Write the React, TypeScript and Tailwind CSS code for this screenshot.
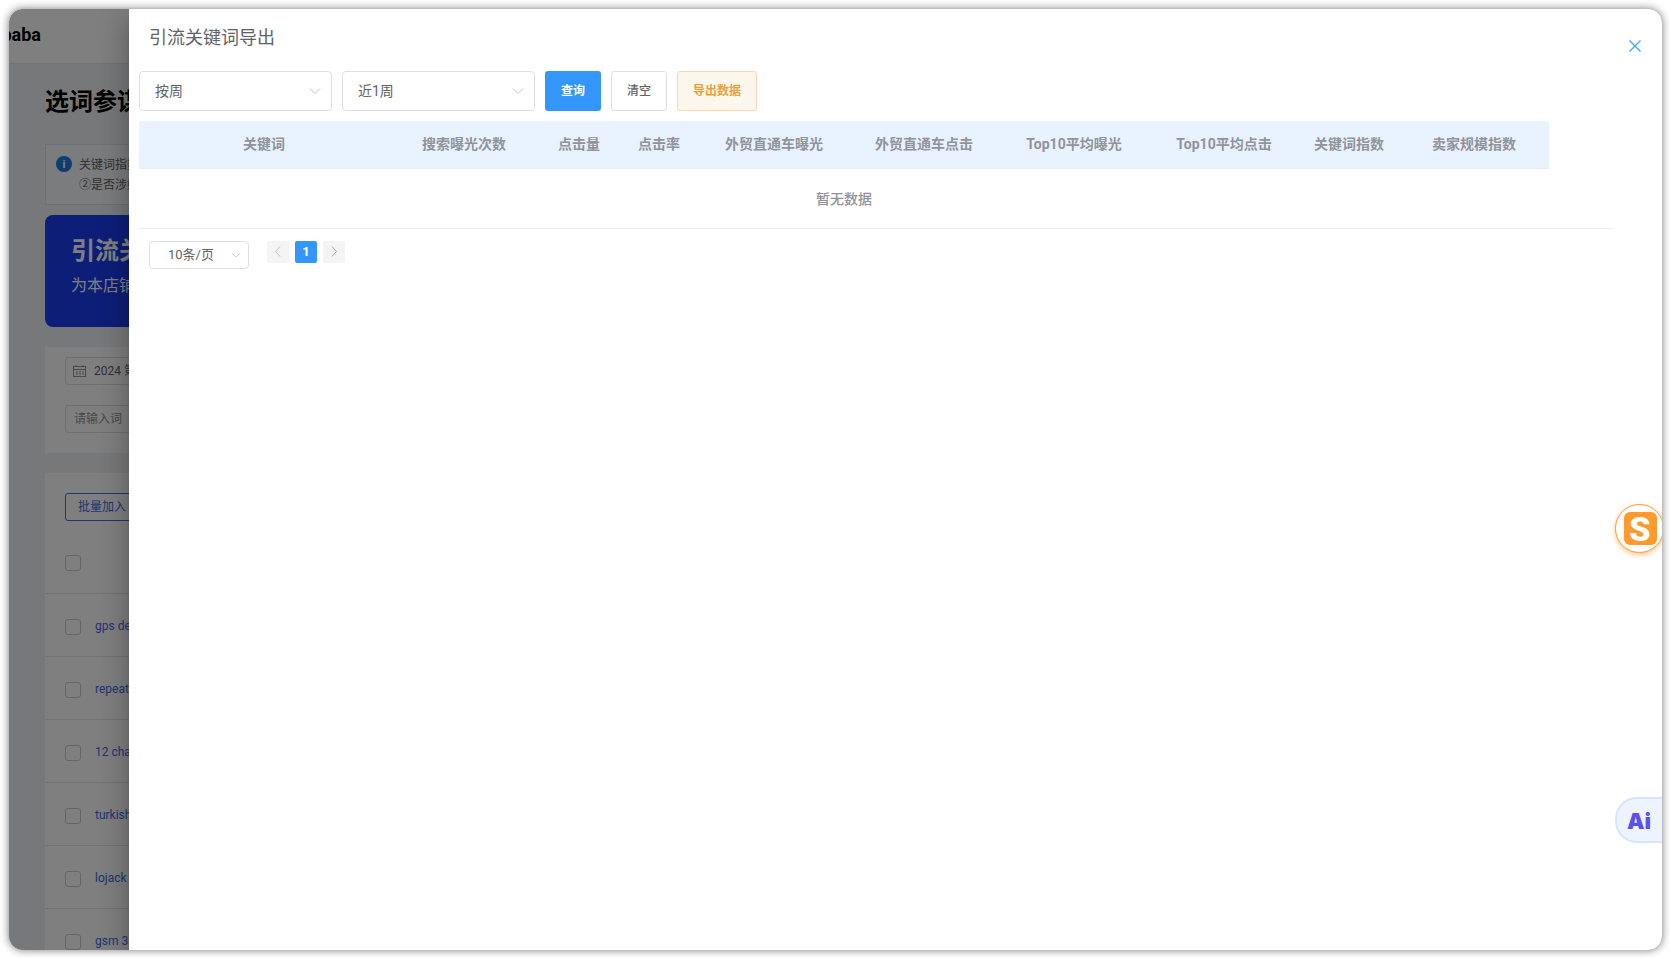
import React from "react";

const sel = "flex items-center justify-between rounded-[4px] border border-[#dcdfe6] bg-white text-[#606266]";

function Chevron({ size = 12 }: { size?: number }) {
  return (
    <svg width={size} height={size} viewBox="0 0 12 12" fill="none" stroke="#c0c4cc" strokeWidth="1">
      <path d="M1 3.5 L6 8.5 L11 3.5" />
    </svg>
  );
}

function Select({ label }: { label: string }) {
  return (
    <div className={`${sel} h-10 w-[193px] pl-[15px] pr-[10px] text-sm`}>
      <span>{label}</span>
      <Chevron />
    </div>
  );
}

const columns: [string, string][] = [
  ["关键词", "w-[250px]"],
  ["搜索曝光次数", "w-[150px]"],
  ["点击量", "w-20"],
  ["点击率", "w-20"],
  ["外贸直通车曝光", "w-[150px]"],
  ["外贸直通车点击", "w-[150px]"],
  ["Top10平均曝光", "w-[150px]"],
  ["Top10平均点击", "w-[150px]"],
  ["关键词指数", "w-[100px]"],
  ["卖家规模指数", "w-[150px]"],
];

const rows = ["gps de", "repeat", "12 cha", "turkish", "lojack", "gsm 3g"];

function Check({ shift = false }: { shift?: boolean }) {
  return <span className={`block h-4 w-4 shrink-0 rounded-[3px] border border-[#c8cbd2] bg-white ${shift ? "mt-[3px]" : ""}`} />;
}

function BackgroundPage() {
  return (
    <div className="h-full w-[120px] overflow-hidden bg-[#eff1f3]">
      <div className="flex h-[55px] items-center justify-end overflow-hidden border-b border-[#dfe8f2] bg-white pb-[2px] pr-[88px]">
        <span className="whitespace-nowrap text-lg font-bold text-black">Alibaba</span>
      </div>
      <div className="w-[740px] px-9">
        <div className="flex h-20 items-center pb-1 text-2xl font-bold text-black">选词参谋</div>
        <div className="flex h-[61px] w-[700px] gap-[5px] border border-[#d5e2f2] bg-[#f6f8fb] pl-[10px] pt-[8px] text-xs text-[#606266]">
          <span className="mt-[3px] flex h-4 w-4 shrink-0 items-center justify-center rounded-full bg-[#1f7ae0] text-[11px] font-bold leading-none text-white">i</span>
          <div className="flex flex-col gap-[4px] pl-[2px] pt-[4px]">
            <span>关键词指数</span>
            <span>②是否涉嫌</span>
          </div>
        </div>
        <div className="mt-[10px] h-28 w-[700px] rounded-lg bg-[#1a3cf0] pl-[26px] pt-[21px] text-white">
          <div className="text-2xl font-bold leading-[30px]">引流关</div>
          <div className="mt-[8px] text-base">为本店铺</div>
        </div>
        <div className="mt-5 flex h-[106px] w-[700px] flex-col gap-5 bg-white px-5 pt-[10px]">
          <div className="flex h-7 w-[300px] items-center gap-2 rounded-[3px] border border-[#dcdfe6] pl-[7px] text-xs text-[#606266]">
            <svg width="13" height="12" viewBox="0 0 13 12" fill="none" stroke="#909399" strokeWidth="1">
              <rect x="0.5" y="1.5" width="12" height="10" />
              <path d="M0.5 4.5H12.5M3 0V2M10 0V2M3 7H5M6 7H8M9 7H11M3 9H5M6 9H8M9 9H11" />
            </svg>
            <span>2024 第</span>
          </div>
          <div className="flex h-7 w-[300px] items-center rounded-[3px] border border-[#dcdfe6] pl-2 text-xs text-[#909399]">请输入词</div>
        </div>
        <div className="mt-5 w-[700px] bg-white pt-5">
          <div className="ml-5 flex h-7 w-[120px] items-center rounded-[3px] border border-[#3f6ae8] pl-3 text-xs text-[#3f6ae8]">批量加入</div>
          <div className="flex h-[73px] items-center border-b border-[#e4e7ed] pl-5 pt-3">
            <Check />
          </div>
          {rows.map((r) => (
            <div key={r} className="flex h-[63px] items-center gap-[14px] border-b border-[#e4e7ed] pl-5 text-xs text-[#3f6ae8]">
              <Check shift />
              <span className="mt-[2px]">{r}</span>
            </div>
          ))}
        </div>
      </div>
    </div>
  );
}

export default function App() {
  return (
    <div className="h-[959px] w-[1671px] overflow-hidden bg-white p-[9px] font-[family-name:Roboto,'Noto_Sans_CJK_SC',sans-serif]">
      <div className="h-[941px] w-[1653px] rounded-[14px] shadow-[0_0_9px_rgba(0,0,0,0.55)]">
        <div className="relative h-full w-full overflow-hidden rounded-[14px]">
          <BackgroundPage />
          <div className="absolute inset-0 bg-black/50" />
          <div className="absolute bottom-0 right-0 top-0 flex w-[1533px] flex-col bg-white shadow-[0_8px_10px_-5px_rgba(0,0,0,0.2),0_16px_24px_2px_rgba(0,0,0,0.14),0_6px_30px_5px_rgba(0,0,0,0.12)]">
            <div className="flex h-[62px] shrink-0 items-center justify-between pb-1 pl-5 pr-[21px] text-lg text-[#606266]">
              <span>引流关键词导出</span>
              <svg width="12" height="12" viewBox="0 0 12 12" fill="none" stroke="#409eff" strokeWidth="1.2" className="mt-[15px]">
                <path d="M0.5 0.5 L11.5 11.5 M11.5 0.5 L0.5 11.5" />
              </svg>
            </div>
            <div className="ml-[10px] flex h-10 gap-[10px]">
              <Select label="按周" />
              <Select label="近1周" />
              <button className="h-10 w-14 rounded-[3px] bg-[#3296fa] text-xs font-bold text-white">查询</button>
              <button className="h-10 w-14 rounded-[3px] border border-[#dcdfe6] bg-white text-xs font-medium text-[#606266]">清空</button>
              <button className="h-10 w-20 rounded-[3px] border border-[#f5dab1] bg-[#fdf6ec] text-xs font-bold text-[#e6a23c]">导出数据</button>
            </div>
            <div className="ml-[10px] mt-[10px] flex h-12 w-[1410px] items-center border-b border-[#e4ecf5] bg-[#e8f3ff] pb-[2px] text-sm font-bold text-[#909399]">
              {columns.map(([c, w]) => (
                <div key={c} className={`${w} text-center`}>{c}</div>
              ))}
            </div>
            <div className="ml-[10px] flex h-[60px] w-[1475px] items-center border-b border-[#ebeef5] text-sm font-medium text-[#909399]">
              <div className="w-[1410px] text-center">暂无数据</div>
            </div>
            <div className="ml-5 mt-3 flex items-start">
              <div className={`${sel} h-7 w-[100px] pl-[18px] pr-[7px] text-[13px]`}>
                <span>10条/页</span>
                <Chevron size={10} />
              </div>
              <div className="ml-[18px] flex gap-[6px]">
                <span className="flex h-[22px] w-[22px] items-center justify-center rounded-[2px] bg-[#f4f4f5] pb-[2px]">
                  <svg width="8" height="11" viewBox="0 0 8 11" fill="none" stroke="#c0c4cc" strokeWidth="1"><path d="M6 0.5 L1.5 5.5 L6 10.5" /></svg>
                </span>
                <span className="flex h-[22px] w-[22px] items-center justify-center rounded-[2px] bg-[#3296fa] text-[13px] font-bold text-white">1</span>
                <span className="flex h-[22px] w-[22px] items-center justify-center rounded-[2px] bg-[#f4f4f5] pb-[2px]">
                  <svg width="8" height="11" viewBox="0 0 8 11" fill="none" stroke="#a8abb2" strokeWidth="1"><path d="M2 0.5 L6.5 5.5 L2 10.5" /></svg>
                </span>
              </div>
            </div>
            <div className="absolute left-[1486px] top-[495px] flex h-[49px] w-[49px] items-center justify-center rounded-full border border-[#ff9a2e] bg-white shadow-[0_2px_5px_rgba(255,154,46,0.55)]">
              <div className="ml-[1px] flex h-[33px] w-[33px] items-center justify-center rounded-[6px] bg-[#ff9a2e] text-[34px] font-black leading-none text-white">S</div>
            </div>
            <div className="absolute left-[1486px] top-[788px] flex h-[46px] w-[60px] items-center rounded-l-[22px] border-2 border-[#d5e4ff] bg-[#eef4ff] pl-[10px] pt-[2px]">
              <span className="font-[family-name:Inter,sans-serif] text-[22px] font-black leading-none text-[#5b4ff0]">Ai</span>
            </div>
          </div>
        </div>
      </div>
    </div>
  );
}
